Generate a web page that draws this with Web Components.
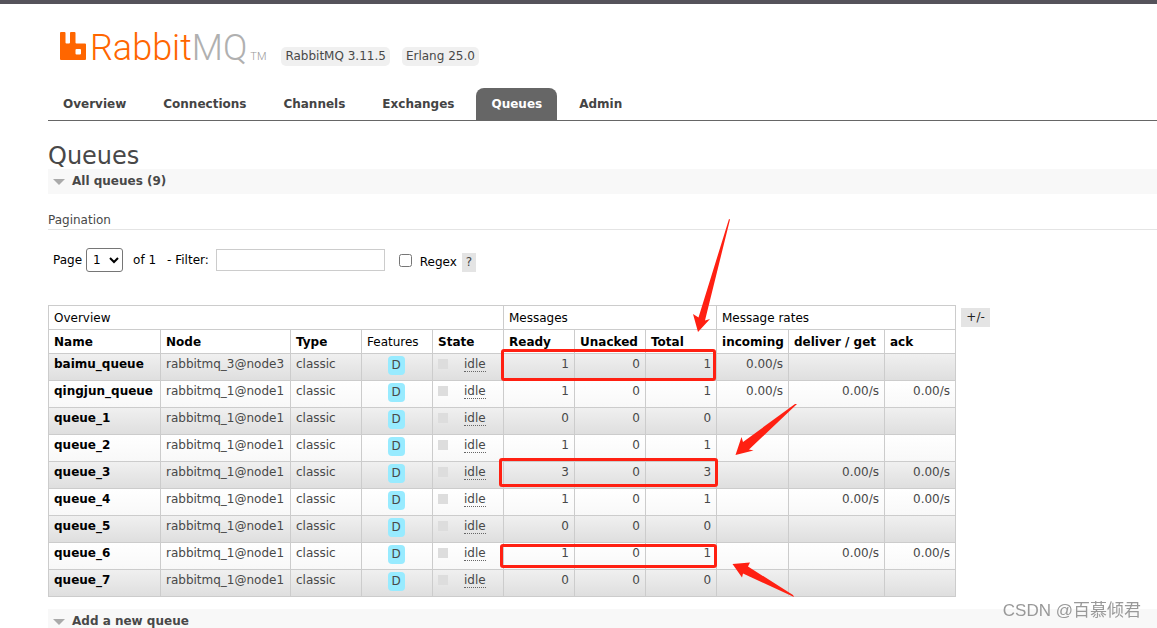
<!DOCTYPE html>
<html lang="en">
<head>
<meta charset="utf-8">
<title>RabbitMQ Management</title>
<style>
html { scrollbar-width: none; }
body { margin: 0; background: #fff; color: #484848; font: 12px/15px "DejaVu Sans", Verdana, sans-serif; }
</style>
</head>
<body>
<mq-app></mq-app>
<script>
function define(name, html, setup) {
  const template = document.createElement('template');
  template.innerHTML = html;
  customElements.define(name, class extends HTMLElement {
    constructor() {
      super();
      this.attachShadow({ mode: 'open' }).append(template.content.cloneNode(true));
    }
    connectedCallback() { if (setup) setup(this, this.shadowRoot); }
  });
}

define('mq-logo', `
<style>
:host { display: flex; align-items: flex-end; color: #f60; font: 300 36px/44px Roboto, sans-serif; }
svg { width: 27px; height: 28px; margin: 0 3px 10px 0; }
.grey { color: #b0b0b0; }
small { font: 300 11px/15px Roboto, sans-serif; color: #999; margin: 0 0 6px 3px; }
</style>
<svg viewBox="0 0 27 28" aria-hidden="true"><path fill="#f60" fill-rule="evenodd" d="M1 0H4.500Q5.500 0 5.500 1V10.500Q5.500 11.500 6.500 11.500H9Q10 11.500 10 10.500V1Q10 0 11 0H14.500Q15.500 0 15.500 1V10.500Q15.500 11.500 16.500 11.500H25Q26 11.500 26 12.500V27Q26 28 25 28H1Q0 28 0 27V1Q0 0 1 0ZM16.500 17Q15.500 17 15.500 18V21.500Q15.500 22.500 16.500 22.500H20Q21 22.500 21 21.500V18Q21 17 20 17Z"/></svg>
<span>Rabbit<span class="grey">MQ</span></span><small>TM</small>`);

define('mq-pill', `
<style>:host { display: block; padding: 2px 4px; border-radius: 5px; background: #f0f0f0; line-height: 15px; }</style>
<slot></slot>`);

define('mq-tab', `
<style>
:host { display: block; }
a { display: block; padding: 9px 15px 8px; border-radius: 8px 8px 0 0; color: #444; font-weight: bold; text-decoration: none; }
:host([selected]) a { background: #666; color: #fff; }
</style>
<a href="#"><slot></slot></a>`);

define('mq-header', `
<style>
:host { display: block; border-top: 4px solid #55535b; }
.brand { display: flex; align-items: flex-end; height: 62px; padding-left: 60px; }
mq-logo { margin-bottom: -4px; }
.versions { display: flex; gap: 12px; margin-left: 15px; }
nav { display: flex; gap: 7px; margin: 22px 0 0 48px; border-bottom: 1px solid #666; }
</style>
<header class="brand"><mq-logo></mq-logo>
<div class="versions"><mq-pill>RabbitMQ 3.11.5</mq-pill><mq-pill>Erlang 25.0</mq-pill></div></header>
<nav><mq-tab>Overview</mq-tab><mq-tab>Connections</mq-tab><mq-tab>Channels</mq-tab><mq-tab>Exchanges</mq-tab><mq-tab selected>Queues</mq-tab><mq-tab>Admin</mq-tab></nav>`);

define('mq-section', `
<style>
:host { display: block; }
h2 { display: flex; align-items: center; gap: 7px; margin: 0; padding: 5px; background: #f8f8f8; font-size: 12px; line-height: 15px; }
svg { width: 12px; height: 6px; }
</style>
<h2><svg viewBox="0 0 12 6" aria-hidden="true"><path fill="#aaa" d="M0 0H12L6 6Z"/></svg><slot name="title"></slot></h2>
<slot></slot>`);

define('mq-pagination', `
<style>
:host { display: block; }
h3 { margin: 18px 0; padding: 1px 0; border-bottom: 1px solid #e4e4e4; font-size: 12px; font-weight: normal; line-height: 15px; }
form { display: flex; align-items: center; height: 24px; padding-left: 5px; color: #000; }
select { box-sizing: border-box; width: 37px; height: 24px; margin: 0 10px 0 4px; padding: 0 0 0 2px; border: 1px solid #767676; border-radius: 3px; background: #fff; color: #000; font: inherit; }
input[type=text] { box-sizing: border-box; width: 169px; height: 22px; margin: 0 14px 0 7px; border: 1px solid #ccc; font: inherit; }
input[type=checkbox] { width: 13px; height: 13px; margin: 0 8px 0 0; }
.filter { margin-left: 11px; }
.regex { display: flex; align-items: center; align-self: flex-end; }
button { width: 14px; height: 19px; margin-left: 5px; padding: 0; border: 0; background: #e4e4e4; color: #444; font: inherit; }
</style>
<h3>Pagination</h3>
<form>
<label for="page">Page</label><select id="page"><option>1</option></select><span>of 1</span>
<label class="filter" for="filter">- Filter:</label><input type="text" id="filter">
<input type="checkbox" id="regex"><div class="regex"><label for="regex">Regex</label><button type="button">?</button></div>
</form>`);

define('mq-marks', `
<style>
:host { position: absolute; left: 0; top: -105px; pointer-events: none; }
svg { display: block; width: 800px; height: 410px; }
</style>
<svg viewBox="48 200 800 410" aria-hidden="true">
<g fill="none" stroke="#ff2012" stroke-width="3"><rect x="502.500" y="350.500" width="212" height="29" rx="1.500"/><rect x="500.500" y="459.500" width="216" height="26" rx="1.500"/><rect x="501.500" y="545.500" width="214" height="21" rx="1.500"/></g>
<g fill="#ff2012"><path d="M729 219L730 219.500L705 320.500L710 319L698 332L693 314L698.500 317.500Z"/><path d="M797 404L749 449.500L753.500 450.500L735.500 455L741.500 437L743 442L795 404Z"/><path d="M794 597L743 573.500L742 577.500L732.500 564L750 562.500L748 566.500L793 595Z"/></g>
</svg>`);

define('mq-queue-table', `
<style>
:host { display: flex; align-items: flex-start; gap: 5px; position: relative; }
table { table-layout: fixed; width: 908px; border-collapse: collapse; color: #484848; }
th, td { box-sizing: border-box; border: 1px solid #ccc; padding: 5px 5px 3px; text-align: left; vertical-align: top; white-space: nowrap; }
thead { color: #000; }
thead th { height: 24px; }
th.plain { font-weight: normal; }
tbody tr { background: linear-gradient(#fff, #f8f8f8); }
tbody tr:nth-child(odd) { background: linear-gradient(#f0f0f0, #dedede); }
tbody th, tbody td { height: 27px; padding: 3px 5px; }
a { color: #000; text-decoration: none; }
.num { text-align: right; }
tbody .feature { padding: 2px 2px 0 0; text-align: center; }
.feature abbr { display: inline-block; width: 17px; padding: 2px 0; border-radius: 4px; background: #98ebff; }
.state div { display: flex; gap: 16px; }
.state i { width: 10px; height: 10px; margin-top: 2px; background: #ddd; }
.state abbr { border-bottom: 1px dotted #666; line-height: 14px; }
button { width: 29px; height: 19px; margin-top: 3px; padding: 0; border: 0; background: #e4e4e4; color: #222; font: inherit; }
</style>
<table>
<colgroup><col style="width:112px"><col style="width:130px"><col style="width:71px"><col style="width:71px"><col style="width:71px"><col style="width:71px"><col style="width:71px"><col style="width:71px"><col style="width:72px"><col style="width:96px"><col style="width:71px"></colgroup>
<thead>
<tr><th class="plain" colspan="5">Overview</th><th class="plain" colspan="3">Messages</th><th class="plain" colspan="3">Message rates</th></tr>
<tr><th>Name</th><th>Node</th><th>Type</th><th class="plain">Features</th><th>State</th><th>Ready</th><th>Unacked</th><th>Total</th><th>incoming</th><th>deliver / get</th><th>ack</th></tr>
</thead><tbody></tbody></table>
<button type="button">+/-</button>
<mq-marks></mq-marks>`, (host, root) => {
  const rate = '0.00/s';
  const queues = [
    ['baimu_queue', 3, 1, rate, '', ''],
    ['qingjun_queue', 1, 1, rate, rate, rate],
    ['queue_1', 1, 0, '', '', ''],
    ['queue_2', 1, 1, '', '', ''],
    ['queue_3', 1, 3, '', rate, rate],
    ['queue_4', 1, 1, '', rate, rate],
    ['queue_5', 1, 0, '', '', ''],
    ['queue_6', 1, 1, '', rate, rate],
    ['queue_7', 1, 0, '', '', '']
  ];
  root.querySelector('tbody').innerHTML = queues.map(([name, node, ready, ...rates]) =>
    `<tr><th><a href="#">${name}</a></th><td>rabbitmq_${node}@node${node}</td><td>classic</td>` +
    `<td class="feature"><abbr>D</abbr></td><td class="state"><div><i></i><abbr>idle</abbr></div></td>` +
    [ready, 0, ready, ...rates].map(v => `<td class="num">${v}</td>`).join('') + '</tr>').join('');
});

define('mq-watermark', `
<style>:host { position: fixed; right: 16px; bottom: 5px; color: #999; font: 17px/24px "Liberation Sans", "Noto Sans CJK SC", sans-serif; }</style>
<slot></slot>`);

define('mq-app', `
<style>
:host { display: block; }
main { padding-left: 48px; }
h1 { margin: 22px 0 0; font-size: 24px; font-weight: normal; line-height: 26px; }
mq-queue-table { margin: 33px 0 12px; }
</style>
<mq-header></mq-header>
<main><h1>Queues</h1>
<mq-section><span slot="title">All queues (9)</span><mq-pagination></mq-pagination><mq-queue-table></mq-queue-table></mq-section>
<mq-section><span slot="title">Add a new queue</span></mq-section></main>
<mq-watermark>CSDN @百慕倾君</mq-watermark>`);
</script>
</body>
</html>
